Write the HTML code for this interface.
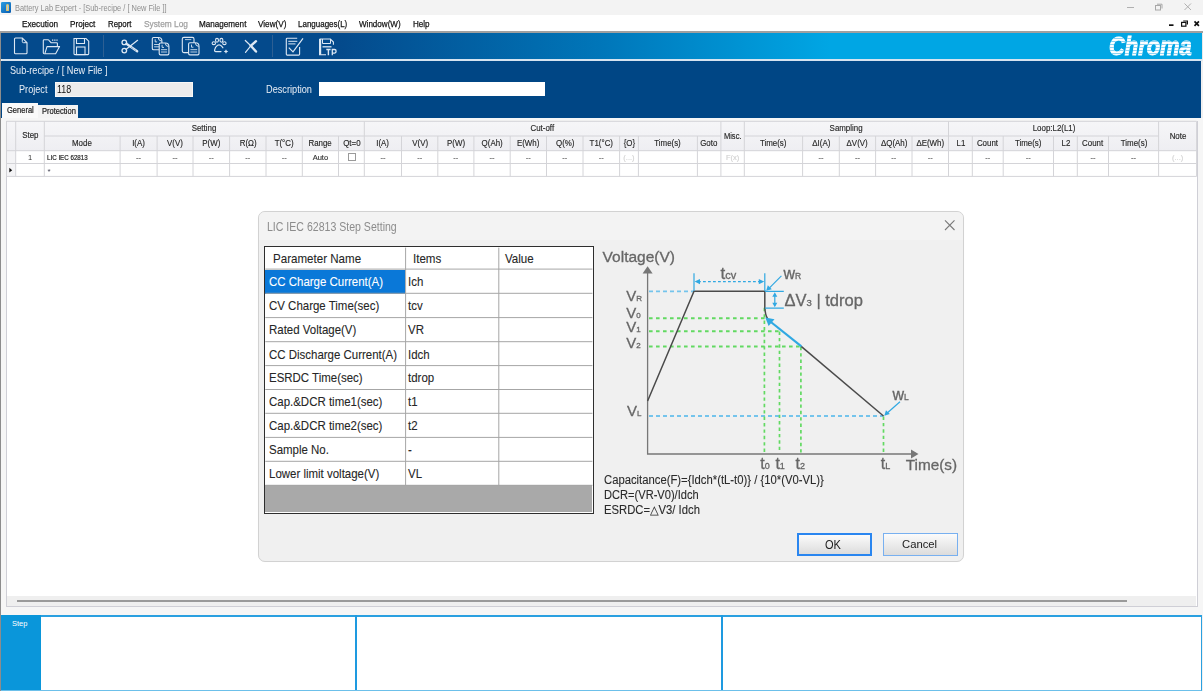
<!DOCTYPE html><html><head><meta charset="utf-8"><style>
html,body{margin:0;padding:0;}
body{width:1203px;height:691px;overflow:hidden;position:relative;background:#f0f0f0;font-family:"Liberation Sans",sans-serif;}
.t{position:absolute;white-space:nowrap;transform-origin:0 0;}
.c{text-align:center;}
.b{position:absolute;box-sizing:border-box;}
svg{position:absolute;left:0;top:0;}
</style></head><body>
<div class="b" style="left:0px;top:0px;width:1203px;height:15px;background:#f3f3f3;"></div>
<div class="b" style="left:1.2px;top:2px;width:10px;height:10.8px;background:linear-gradient(135deg,#2a9ee2,#0a5cb0);border-radius:1.2px;"></div>
<div class="b" style="left:5.6px;top:3.5px;width:3.6px;height:7.6px;background:#a8d0ec;border:0.9px solid #e2c46a;border-radius:1.5px 1.5px 0.8px 0.8px;"></div>
<div class="t" style="left:14.5px;top:4.2px;font-size:8.6px;line-height:8.6px;color:#8e8e8e;font-weight:normal;transform:scaleX(0.865);">Battery Lab Expert - [Sub-recipe / [ New File ]]</div>
<div class="b" style="left:1127px;top:7px;width:7px;height:1px;background:#b0b0b0;"></div>
<svg width="1203" height="40" viewBox="0 0 1203 40" style="left:0;top:0"><rect x="1155.5" y="5.5" width="5" height="4.5" fill="none" stroke="#a8a8a8" stroke-width="1"/><path d="M1157 4.2 H1162 V8.5" fill="none" stroke="#a8a8a8" stroke-width="1"/><path d="M1184.5 3.5 L1191 10 M1191 3.5 L1184.5 10" stroke="#a8a8a8" stroke-width="0.9"/></svg>
<div class="b" style="left:0px;top:15px;width:1203px;height:16.5px;background:#ffffff;"></div>
<div class="t" style="left:22px;top:18.8px;font-size:9.8px;line-height:9.8px;color:#111;font-weight:normal;transform:scaleX(0.8365714285714284);-webkit-text-stroke:0.25px;">Execution</div>
<div class="t" style="left:70px;top:18.8px;font-size:9.8px;line-height:9.8px;color:#111;font-weight:normal;transform:scaleX(0.8326530612244898);-webkit-text-stroke:0.25px;">Project</div>
<div class="t" style="left:107.5px;top:18.8px;font-size:9.8px;line-height:9.8px;color:#111;font-weight:normal;transform:scaleX(0.79934693877551);-webkit-text-stroke:0.25px;">Report</div>
<div class="t" style="left:143.5px;top:18.8px;font-size:9.8px;line-height:9.8px;color:#a0a0a0;font-weight:normal;transform:scaleX(0.8483265306122447);-webkit-text-stroke:0.25px;">System Log</div>
<div class="t" style="left:198.7px;top:18.8px;font-size:9.8px;line-height:9.8px;color:#111;font-weight:normal;transform:scaleX(0.8287346938775508);-webkit-text-stroke:0.25px;">Management</div>
<div class="t" style="left:258.2px;top:18.8px;font-size:9.8px;line-height:9.8px;color:#111;font-weight:normal;transform:scaleX(0.8326530612244898);-webkit-text-stroke:0.25px;">View(V)</div>
<div class="t" style="left:298px;top:18.8px;font-size:9.8px;line-height:9.8px;color:#111;font-weight:normal;transform:scaleX(0.8150204081632653);-webkit-text-stroke:0.25px;">Languages(L)</div>
<div class="t" style="left:359.4px;top:18.8px;font-size:9.8px;line-height:9.8px;color:#111;font-weight:normal;transform:scaleX(0.821877551020408);-webkit-text-stroke:0.25px;">Window(W)</div>
<div class="t" style="left:412.8px;top:18.8px;font-size:9.8px;line-height:9.8px;color:#111;font-weight:normal;transform:scaleX(0.8228571428571428);-webkit-text-stroke:0.25px;">Help</div>
<svg width="1203" height="40" viewBox="0 0 1203 40" style="left:0;top:0"><rect x="1169" y="24.3" width="4.5" height="1.7" fill="#111"/><rect x="1181.6" y="22.4" width="4.3" height="3.8" fill="none" stroke="#111" stroke-width="1.2"/><path d="M1183.2 21 H1187.4 V24.6" fill="none" stroke="#111" stroke-width="1.2"/><path d="M1194.5 21.4 L1198.9 25.8 M1198.9 21.4 L1194.5 25.8" stroke="#111" stroke-width="1.7"/></svg>
<div class="b" style="left:0px;top:31.3px;width:1203px;height:1.7px;background:#a0a0a0;"></div>
<div class="b" style="left:0px;top:33px;width:1203px;height:26px;background:linear-gradient(to right,#044a8c 0px,#044a8c 340px,#0076b9 600px,#00a6e4 830px,#00a6e4 1203px);"></div>
<div class="b" style="left:0px;top:33px;width:1.2px;height:658px;background:#8c8c8c;"></div>
<div class="b" style="left:1201.5px;top:33px;width:1.5px;height:28px;background:#e8e8e8;"></div>
<div class="b" style="left:1.5px;top:58.8px;width:1200px;height:2.2px;background:#d5e3f0;"></div>
<div class="b" style="left:103.3px;top:35px;width:0.9px;height:22px;background:#2d5f93;"></div>
<div class="b" style="left:271.6px;top:35px;width:0.9px;height:22px;background:#2d5f93;"></div>
<svg width="1203" height="691" viewBox="0 0 1203 691"><path d="M15.5 38 H22.3 L27 42.7 V52.8 Q27 53.8 26 53.8 H15.5 Q14.5 53.8 14.5 52.8 V39 Q14.5 38 15.5 38 Z" fill="none" stroke="#dde8f4" stroke-width="1.1"/><path d="M22.3 38 V41.5 Q22.3 42.7 23.5 42.7 H27" fill="none" stroke="#dde8f4" stroke-width="1"/><path d="M57.4 46.6 V43.5 Q57.4 42.7 56.6 42.7 H51 L49 40.3 Q48.7 39.7 48 39.7 H44.2 Q43.3 39.7 43.3 40.6 V52.8 Q43.3 53.7 44.2 53.7 H55.6 L59.6 46.6 H47 L45 53.2" fill="none" stroke="#dde8f4" stroke-width="1.1" stroke-linejoin="round"/><path d="M52 40.2 H57.6" stroke="#dde8f4" stroke-width="1.2" stroke-dasharray="1.3 0.9"/><path d="M74 38.5 H86 L88.7 41.2 V53.8 Q88.7 54.6 87.9 54.6 H74.8 Q74 54.6 74 53.8 Z" fill="none" stroke="#dde8f4" stroke-width="1.1"/><path d="M76.5 38.5 V43.5 H84.5 V38.5" fill="none" stroke="#dde8f4" stroke-width="1.1"/><rect x="76.5" y="47" width="8.5" height="7.6" fill="none" stroke="#dde8f4" stroke-width="1.1"/><circle cx="124.3" cy="42.4" r="2.3" fill="none" stroke="#dde8f4" stroke-width="1.3"/><circle cx="124.3" cy="50.6" r="2.3" fill="none" stroke="#dde8f4" stroke-width="1.3"/><path d="M126.2 49.3 L137.6 40.3" stroke="#dde8f4" stroke-width="1.2" stroke-linecap="round"/><path d="M126.4 43.8 L137.2 51.3" stroke="#dde8f4" stroke-width="2.3" stroke-linecap="round"/><path d="M131 47.2 L136 50.6" stroke="#054a8c" stroke-width="0.6" stroke-dasharray="0.8 0.8"/><path d="M153.60000000000002 37.5 H158.3 Q161.9 37.5 161.9 41.1 V48.400000000000006 Q161.9 49.7 160.6 49.7 H153.60000000000002 Q152.3 49.7 152.3 48.400000000000006 V38.8 Q152.3 37.5 153.60000000000002 37.5 Z" fill="#054a8c" stroke="#dde8f4" stroke-width="1.1"/><path d="M158.3 37.9 Q158.5 40.7 161.5 41.1" fill="none" stroke="#dde8f4" stroke-width="1"/><path d="M155.20000000000002 39.3 V41.9 H157.10000000000002" fill="none" stroke="#dde8f4" stroke-width="0.9"/><path d="M154.10000000000002 44.5 H160.1 M154.10000000000002 46.800000000000004 H160.1" stroke="#dde8f4" stroke-width="1" opacity="0.85"/><path d="M160.5 43 H165.3 Q168.9 43 168.9 46.6 V53.6 Q168.9 54.9 167.6 54.9 H160.5 Q159.2 54.9 159.2 53.6 V44.3 Q159.2 43 160.5 43 Z" fill="#054a8c" stroke="#dde8f4" stroke-width="1.1"/><path d="M165.3 43.4 Q165.5 46.2 168.5 46.6" fill="none" stroke="#dde8f4" stroke-width="1"/><path d="M162.1 44.8 V47.4 H164.0" fill="none" stroke="#dde8f4" stroke-width="0.9"/><path d="M161.0 49.699999999999996 H167.1 M161.0 52.0 H167.1" stroke="#dde8f4" stroke-width="1" opacity="0.85"/><rect x="182.3" y="37.4" width="11.7" height="15.2" rx="1.6" fill="none" stroke="#dde8f4" stroke-width="1.1"/><path d="M185 39.6 H191.3" stroke="#dde8f4" stroke-width="1" opacity="0.8"/><path d="M189.9 42.8 H195.4 Q199 42.8 199 46.4 V53.6 Q199 54.9 197.7 54.9 H189.9 Q188.6 54.9 188.6 53.6 V44.099999999999994 Q188.6 42.8 189.9 42.8 Z" fill="#054a8c" stroke="#dde8f4" stroke-width="1.1"/><path d="M195.4 43.199999999999996 Q195.6 46.0 198.6 46.4" fill="none" stroke="#dde8f4" stroke-width="1"/><path d="M191.5 44.599999999999994 V47.199999999999996 H193.4" fill="none" stroke="#dde8f4" stroke-width="0.9"/><path d="M190.4 49.699999999999996 H197.2 M190.4 52.0 H197.2" stroke="#dde8f4" stroke-width="1" opacity="0.85"/><ellipse cx="217" cy="40.3" rx="1.5" ry="1.9" fill="none" stroke="#dde8f4" stroke-width="1.1"/><ellipse cx="221.4" cy="40.3" rx="1.5" ry="1.9" fill="none" stroke="#dde8f4" stroke-width="1.1"/><ellipse cx="213.8" cy="43.2" rx="1.7" ry="1.4" fill="none" stroke="#dde8f4" stroke-width="1.1"/><ellipse cx="224.4" cy="43.2" rx="1.7" ry="1.4" fill="none" stroke="#dde8f4" stroke-width="1.1"/><path d="M221 51.6 H215.8 Q214.4 51.6 214.6 50 Q215.2 46.8 217.6 45.2 Q219 44.5 220.5 45.2 Q222 46.2 222.9 47.8" fill="none" stroke="#dde8f4" stroke-width="1.2" stroke-linecap="round"/><path d="M226 49.2 Q226.3 51 228.3 51.5 Q226.3 52 226 53.8 Q225.7 52 223.7 51.5 Q225.7 51 226 49.2 Z" fill="#dde8f4"/><path d="M245.3 40.5 L250.8 45.9 L245.5 52.4" fill="none" stroke="#dde8f4" stroke-width="1.2" stroke-linecap="round"/><path d="M256 41.2 L250.8 45.9 L256 51.5" fill="none" stroke="#dde8f4" stroke-width="2.4" stroke-linecap="round"/><path d="M297.2 38.2 H287.2 Q286.3 38.2 286.3 39.1 V54.2 Q286.3 55.1 287.2 55.1 H298.7 Q299.6 55.1 299.6 54.2 V47" fill="none" stroke="#dde8f4" stroke-width="1.1"/><path d="M288.3 41.3 H297.3 M288.3 43.9 H295.5" stroke="#dde8f4" stroke-width="1"/><path d="M288.8 47.6 L293 51.8 L303 38.3" fill="none" stroke="#dde8f4" stroke-width="1.2"/><path d="M319.6 39 H330.4 L333.4 42 V44.8 M319.6 39 V54.8 H326" fill="none" stroke="#dde8f4" stroke-width="1.1"/><path d="M320.3 39 V54.8" stroke="#dde8f4" stroke-width="1.8"/><path d="M322.5 39 V43.5 H330.5 V39" fill="none" stroke="#dde8f4" stroke-width="1"/><path d="M322.5 46.8 H331.5" stroke="#dde8f4" stroke-width="1.3"/><path d="M326.3 49.5 H330.6 M328.4 49.5 V55.2" stroke="#dde8f4" stroke-width="1.4"/><path d="M332.3 55.2 V49.5 H334.6 Q336.1 49.5 336.1 51.3 Q336.1 53.1 334.6 53.1 H332.3" fill="none" stroke="#dde8f4" stroke-width="1.3"/></svg>
<div class="t" style="left:1108.6px;top:32px;font-size:25px;line-height:29px;color:#fff;font-weight:bold;font-style:italic;transform:scaleX(0.875);-webkit-text-stroke:0.9px #fff;">Chroma</div>
<div class="b" style="left:1105px;top:36px;width:90px;height:20px;mix-blend-mode:darken;background:repeating-linear-gradient(to bottom,#fff 0px,#fff 2px,#8fd4f2 2px,#8fd4f2 3px);"></div>
<div class="b" style="left:1.2px;top:61px;width:1200.3px;height:56.5px;background:#004685;"></div>
<div class="t" style="left:10.3px;top:64.8px;font-size:11px;line-height:11px;color:#e8eef6;font-weight:normal;transform:scaleX(0.83);">Sub-recipe / [ New File ]</div>
<div class="t" style="left:19.1px;top:83.6px;font-size:11px;line-height:11px;color:#e8eef6;font-weight:normal;transform:scaleX(0.83);">Project</div>
<div class="b" style="left:54.9px;top:82.1px;width:138.3px;height:15px;background:#ececec;border:1px solid #f8f8f8;"></div>
<div class="t" style="left:56.5px;top:84px;font-size:10.5px;line-height:10.5px;color:#111;font-weight:normal;transform:scaleX(0.85);">118</div>
<div class="t" style="left:266px;top:83.6px;font-size:11px;line-height:11px;color:#e8eef6;font-weight:normal;transform:scaleX(0.835);">Description</div>
<div class="b" style="left:319px;top:82px;width:225.6px;height:14.1px;background:#ffffff;"></div>
<div class="b" style="left:38.2px;top:104.8px;width:39.9px;height:13px;background:#f4f4f4;"></div>
<div class="b" style="left:2px;top:103px;width:36.4px;height:16px;background:#fafafa;"></div>
<div class="t" style="left:6.6px;top:107.3px;font-size:8.2px;line-height:8.2px;color:#222;font-weight:normal;transform:scaleX(0.92);-webkit-text-stroke:0.2px;">General</div>
<div class="t" style="left:41.6px;top:107.9px;font-size:8.2px;line-height:8.2px;color:#222;font-weight:normal;transform:scaleX(0.92);-webkit-text-stroke:0.2px;">Protection</div>
<div class="b" style="left:1.2px;top:117.5px;width:1201.8px;height:497px;background:#f6f6f6;"></div>
<div class="b" style="left:5.5px;top:120.5px;width:1192px;height:486.5px;background:#ffffff;border:1.2px solid #cfcfd6;"></div>
<div class="b" style="left:6.5px;top:121.3px;width:1190.1px;height:29.39999999999999px;background:linear-gradient(#f6f6f8,#eeeef2);"></div>
<div class="b" style="left:6.5px;top:150.7px;width:1190.1px;height:25.700000000000017px;background:#ffffff;"></div>
<div class="b" style="left:6.5px;top:150.7px;width:9.2px;height:25.700000000000017px;background:#f4f4f6;"></div>
<svg width="1203" height="691" viewBox="0 0 1203 691"><path d="M6.5 121.3 H1196.6" stroke="#d4d4d8" stroke-width="1"/><path d="M44.3 136.0 H720.9" stroke="#d4d4d8" stroke-width="1"/><path d="M744.3 136.0 H1158.6" stroke="#d4d4d8" stroke-width="1"/><path d="M6.5 150.7 H1196.6" stroke="#d4d4d8" stroke-width="1"/><path d="M6.5 163.5 H1196.6" stroke="#d4d4d8" stroke-width="1"/><path d="M6.5 176.4 H1196.6" stroke="#d4d4d8" stroke-width="1"/><path d="M6.5 121.3 V176.4" stroke="#d4d4d8" stroke-width="1"/><path d="M15.7 121.3 V176.4" stroke="#d4d4d8" stroke-width="1"/><path d="M44.3 121.3 V176.4" stroke="#d4d4d8" stroke-width="1"/><path d="M364.3 121.3 V176.4" stroke="#d4d4d8" stroke-width="1"/><path d="M720.9 121.3 V176.4" stroke="#d4d4d8" stroke-width="1"/><path d="M744.3 121.3 V176.4" stroke="#d4d4d8" stroke-width="1"/><path d="M948.5 121.3 V176.4" stroke="#d4d4d8" stroke-width="1"/><path d="M1158.6 121.3 V176.4" stroke="#d4d4d8" stroke-width="1"/><path d="M1196.6 121.3 V176.4" stroke="#d4d4d8" stroke-width="1"/><path d="M120.1 136.0 V176.4" stroke="#d4d4d8" stroke-width="1"/><path d="M157.1 136.0 V176.4" stroke="#d4d4d8" stroke-width="1"/><path d="M193.0 136.0 V176.4" stroke="#d4d4d8" stroke-width="1"/><path d="M229.6 136.0 V176.4" stroke="#d4d4d8" stroke-width="1"/><path d="M266.0 136.0 V176.4" stroke="#d4d4d8" stroke-width="1"/><path d="M302.3 136.0 V176.4" stroke="#d4d4d8" stroke-width="1"/><path d="M338.5 136.0 V176.4" stroke="#d4d4d8" stroke-width="1"/><path d="M401.5 136.0 V176.4" stroke="#d4d4d8" stroke-width="1"/><path d="M437.8 136.0 V176.4" stroke="#d4d4d8" stroke-width="1"/><path d="M473.9 136.0 V176.4" stroke="#d4d4d8" stroke-width="1"/><path d="M510.2 136.0 V176.4" stroke="#d4d4d8" stroke-width="1"/><path d="M546.5 136.0 V176.4" stroke="#d4d4d8" stroke-width="1"/><path d="M583.0 136.0 V176.4" stroke="#d4d4d8" stroke-width="1"/><path d="M619.6 136.0 V176.4" stroke="#d4d4d8" stroke-width="1"/><path d="M638.4 136.0 V176.4" stroke="#d4d4d8" stroke-width="1"/><path d="M697.4 136.0 V176.4" stroke="#d4d4d8" stroke-width="1"/><path d="M802.6 136.0 V176.4" stroke="#d4d4d8" stroke-width="1"/><path d="M839.3 136.0 V176.4" stroke="#d4d4d8" stroke-width="1"/><path d="M875.6 136.0 V176.4" stroke="#d4d4d8" stroke-width="1"/><path d="M912.0 136.0 V176.4" stroke="#d4d4d8" stroke-width="1"/><path d="M972.3 136.0 V176.4" stroke="#d4d4d8" stroke-width="1"/><path d="M1003.2 136.0 V176.4" stroke="#d4d4d8" stroke-width="1"/><path d="M1053.5 136.0 V176.4" stroke="#d4d4d8" stroke-width="1"/><path d="M1077.3 136.0 V176.4" stroke="#d4d4d8" stroke-width="1"/><path d="M1108.5 136.0 V176.4" stroke="#d4d4d8" stroke-width="1"/></svg>
<div class="t c" style="left:15.7px;width:28.599999999999998px;top:130.9px;font-size:8.7px;line-height:8.7px;color:#262626;transform:scaleX(0.91);transform-origin:50% 0;-webkit-text-stroke:0.15px;">Step</div>
<div class="t c" style="left:44.3px;width:320.0px;top:124.4px;font-size:8.7px;line-height:8.7px;color:#262626;transform:scaleX(0.91);transform-origin:50% 0;-webkit-text-stroke:0.15px;">Setting</div>
<div class="t c" style="left:364.3px;width:356.59999999999997px;top:124.4px;font-size:8.7px;line-height:8.7px;color:#262626;transform:scaleX(0.91);transform-origin:50% 0;-webkit-text-stroke:0.15px;">Cut-off</div>
<div class="t c" style="left:720.9px;width:23.399999999999977px;top:131.9px;font-size:8.3px;line-height:8.3px;color:#262626;transform:scaleX(0.91);transform-origin:50% 0;-webkit-text-stroke:0.15px;">Misc.</div>
<div class="t c" style="left:744.3px;width:204.20000000000005px;top:124.4px;font-size:8.7px;line-height:8.7px;color:#262626;transform:scaleX(0.91);transform-origin:50% 0;-webkit-text-stroke:0.15px;">Sampling</div>
<div class="t c" style="left:948.5px;width:210.0999999999999px;top:124.4px;font-size:8.7px;line-height:8.7px;color:#262626;transform:scaleX(0.91);transform-origin:50% 0;-webkit-text-stroke:0.15px;">Loop:L2(L1)</div>
<div class="t c" style="left:1158.6px;width:38.0px;top:131.9px;font-size:8.7px;line-height:8.7px;color:#262626;transform:scaleX(0.91);transform-origin:50% 0;-webkit-text-stroke:0.15px;">Note</div>
<div class="t c" style="left:44.3px;width:75.8px;top:138.9px;font-size:8.7px;line-height:8.7px;color:#262626;transform:scaleX(0.91);transform-origin:50% 0;-webkit-text-stroke:0.15px;">Mode</div>
<div class="t c" style="left:120.1px;width:37.0px;top:138.9px;font-size:8.7px;line-height:8.7px;color:#262626;transform:scaleX(0.91);transform-origin:50% 0;-webkit-text-stroke:0.15px;">I(A)</div>
<div class="t c" style="left:157.1px;width:35.900000000000006px;top:138.9px;font-size:8.7px;line-height:8.7px;color:#262626;transform:scaleX(0.91);transform-origin:50% 0;-webkit-text-stroke:0.15px;">V(V)</div>
<div class="t c" style="left:193.0px;width:36.599999999999994px;top:138.9px;font-size:8.7px;line-height:8.7px;color:#262626;transform:scaleX(0.91);transform-origin:50% 0;-webkit-text-stroke:0.15px;">P(W)</div>
<div class="t c" style="left:229.6px;width:36.400000000000006px;top:138.9px;font-size:8.7px;line-height:8.7px;color:#262626;transform:scaleX(0.91);transform-origin:50% 0;-webkit-text-stroke:0.15px;">R(Ω)</div>
<div class="t c" style="left:266.0px;width:36.30000000000001px;top:138.9px;font-size:8.7px;line-height:8.7px;color:#262626;transform:scaleX(0.91);transform-origin:50% 0;-webkit-text-stroke:0.15px;">T(°C)</div>
<div class="t c" style="left:302.3px;width:36.19999999999999px;top:138.9px;font-size:8.7px;line-height:8.7px;color:#262626;transform:scaleX(0.91);transform-origin:50% 0;-webkit-text-stroke:0.15px;">Range</div>
<div class="t c" style="left:338.5px;width:25.80000000000001px;top:138.9px;font-size:8.7px;line-height:8.7px;color:#262626;transform:scaleX(0.91);transform-origin:50% 0;-webkit-text-stroke:0.15px;">Qt=0</div>
<div class="t c" style="left:364.3px;width:37.19999999999999px;top:138.9px;font-size:8.7px;line-height:8.7px;color:#262626;transform:scaleX(0.91);transform-origin:50% 0;-webkit-text-stroke:0.15px;">I(A)</div>
<div class="t c" style="left:401.5px;width:36.30000000000001px;top:138.9px;font-size:8.7px;line-height:8.7px;color:#262626;transform:scaleX(0.91);transform-origin:50% 0;-webkit-text-stroke:0.15px;">V(V)</div>
<div class="t c" style="left:437.8px;width:36.099999999999966px;top:138.9px;font-size:8.7px;line-height:8.7px;color:#262626;transform:scaleX(0.91);transform-origin:50% 0;-webkit-text-stroke:0.15px;">P(W)</div>
<div class="t c" style="left:473.9px;width:36.30000000000001px;top:138.9px;font-size:8.7px;line-height:8.7px;color:#262626;transform:scaleX(0.91);transform-origin:50% 0;-webkit-text-stroke:0.15px;">Q(Ah)</div>
<div class="t c" style="left:510.2px;width:36.30000000000001px;top:138.9px;font-size:8.7px;line-height:8.7px;color:#262626;transform:scaleX(0.91);transform-origin:50% 0;-webkit-text-stroke:0.15px;">E(Wh)</div>
<div class="t c" style="left:546.5px;width:36.5px;top:138.9px;font-size:8.7px;line-height:8.7px;color:#262626;transform:scaleX(0.91);transform-origin:50% 0;-webkit-text-stroke:0.15px;">Q(%)</div>
<div class="t c" style="left:583.0px;width:36.60000000000002px;top:138.9px;font-size:8.7px;line-height:8.7px;color:#262626;transform:scaleX(0.91);transform-origin:50% 0;-webkit-text-stroke:0.15px;">T1(°C)</div>
<div class="t c" style="left:619.6px;width:18.799999999999955px;top:138.9px;font-size:8.7px;line-height:8.7px;color:#262626;transform:scaleX(0.91);transform-origin:50% 0;-webkit-text-stroke:0.15px;">{O}</div>
<div class="t c" style="left:638.4px;width:59.0px;top:138.9px;font-size:8.7px;line-height:8.7px;color:#262626;transform:scaleX(0.91);transform-origin:50% 0;-webkit-text-stroke:0.15px;">Time(s)</div>
<div class="t c" style="left:697.4px;width:23.5px;top:138.9px;font-size:8.7px;line-height:8.7px;color:#262626;transform:scaleX(0.91);transform-origin:50% 0;-webkit-text-stroke:0.15px;">Goto</div>
<div class="t c" style="left:744.3px;width:58.30000000000007px;top:138.9px;font-size:8.7px;line-height:8.7px;color:#262626;transform:scaleX(0.91);transform-origin:50% 0;-webkit-text-stroke:0.15px;">Time(s)</div>
<div class="t c" style="left:802.6px;width:36.69999999999993px;top:138.9px;font-size:8.7px;line-height:8.7px;color:#262626;transform:scaleX(0.91);transform-origin:50% 0;-webkit-text-stroke:0.15px;">ΔI(A)</div>
<div class="t c" style="left:839.3px;width:36.30000000000007px;top:138.9px;font-size:8.7px;line-height:8.7px;color:#262626;transform:scaleX(0.91);transform-origin:50% 0;-webkit-text-stroke:0.15px;">ΔV(V)</div>
<div class="t c" style="left:875.6px;width:36.39999999999998px;top:138.9px;font-size:8.7px;line-height:8.7px;color:#262626;transform:scaleX(0.91);transform-origin:50% 0;-webkit-text-stroke:0.15px;">ΔQ(Ah)</div>
<div class="t c" style="left:912.0px;width:36.5px;top:138.9px;font-size:8.7px;line-height:8.7px;color:#262626;transform:scaleX(0.91);transform-origin:50% 0;-webkit-text-stroke:0.15px;">ΔE(Wh)</div>
<div class="t c" style="left:948.5px;width:23.799999999999955px;top:138.9px;font-size:8.7px;line-height:8.7px;color:#262626;transform:scaleX(0.91);transform-origin:50% 0;-webkit-text-stroke:0.15px;">L1</div>
<div class="t c" style="left:972.3px;width:30.90000000000009px;top:138.9px;font-size:8.7px;line-height:8.7px;color:#262626;transform:scaleX(0.91);transform-origin:50% 0;-webkit-text-stroke:0.15px;">Count</div>
<div class="t c" style="left:1003.2px;width:50.299999999999955px;top:138.9px;font-size:8.7px;line-height:8.7px;color:#262626;transform:scaleX(0.91);transform-origin:50% 0;-webkit-text-stroke:0.15px;">Time(s)</div>
<div class="t c" style="left:1053.5px;width:23.799999999999955px;top:138.9px;font-size:8.7px;line-height:8.7px;color:#262626;transform:scaleX(0.91);transform-origin:50% 0;-webkit-text-stroke:0.15px;">L2</div>
<div class="t c" style="left:1077.3px;width:31.200000000000045px;top:138.9px;font-size:8.7px;line-height:8.7px;color:#262626;transform:scaleX(0.91);transform-origin:50% 0;-webkit-text-stroke:0.15px;">Count</div>
<div class="t c" style="left:1108.5px;width:50.09999999999991px;top:138.9px;font-size:8.7px;line-height:8.7px;color:#262626;transform:scaleX(0.91);transform-origin:50% 0;-webkit-text-stroke:0.15px;">Time(s)</div>
<div class="t c" style="left:15.7px;width:28.599999999999998px;top:154.3px;font-size:7.5px;line-height:7.5px;color:#333;">1</div>
<div class="t" style="left:47px;top:154px;font-size:7.4px;line-height:7.4px;color:#222;font-weight:normal;transform:scaleX(0.84);-webkit-text-stroke:0.2px;">LIC IEC 62813</div>
<div class="t c" style="left:120.1px;width:37.0px;top:153.5px;font-size:7.5px;line-height:7.5px;color:#333;-webkit-text-stroke:0.15px;">--</div>
<div class="t c" style="left:157.1px;width:35.900000000000006px;top:153.5px;font-size:7.5px;line-height:7.5px;color:#333;-webkit-text-stroke:0.15px;">--</div>
<div class="t c" style="left:193.0px;width:36.599999999999994px;top:153.5px;font-size:7.5px;line-height:7.5px;color:#333;-webkit-text-stroke:0.15px;">--</div>
<div class="t c" style="left:229.6px;width:36.400000000000006px;top:153.5px;font-size:7.5px;line-height:7.5px;color:#333;-webkit-text-stroke:0.15px;">--</div>
<div class="t c" style="left:266.0px;width:36.30000000000001px;top:153.5px;font-size:7.5px;line-height:7.5px;color:#333;-webkit-text-stroke:0.15px;">--</div>
<div class="t c" style="left:302.3px;width:36.19999999999999px;top:153.5px;font-size:7.5px;line-height:7.5px;color:#333;-webkit-text-stroke:0.15px;">Auto</div>
<div class="b" style="left:348px;top:153.2px;width:8px;height:8px;border:1px solid #9a9a9a;background:#fff;"></div>
<div class="t c" style="left:364.3px;width:37.19999999999999px;top:153.5px;font-size:7.5px;line-height:7.5px;color:#333;-webkit-text-stroke:0.15px;">--</div>
<div class="t c" style="left:401.5px;width:36.30000000000001px;top:153.5px;font-size:7.5px;line-height:7.5px;color:#333;-webkit-text-stroke:0.15px;">--</div>
<div class="t c" style="left:437.8px;width:36.099999999999966px;top:153.5px;font-size:7.5px;line-height:7.5px;color:#333;-webkit-text-stroke:0.15px;">--</div>
<div class="t c" style="left:473.9px;width:36.30000000000001px;top:153.5px;font-size:7.5px;line-height:7.5px;color:#333;-webkit-text-stroke:0.15px;">--</div>
<div class="t c" style="left:510.2px;width:36.30000000000001px;top:153.5px;font-size:7.5px;line-height:7.5px;color:#333;-webkit-text-stroke:0.15px;">--</div>
<div class="t c" style="left:546.5px;width:36.5px;top:153.5px;font-size:7.5px;line-height:7.5px;color:#333;-webkit-text-stroke:0.15px;">--</div>
<div class="t c" style="left:583.0px;width:36.60000000000002px;top:153.5px;font-size:7.5px;line-height:7.5px;color:#333;-webkit-text-stroke:0.15px;">--</div>
<div class="t c" style="left:619.6px;width:18.799999999999955px;top:153.5px;font-size:7.5px;line-height:7.5px;color:#d2d2d2;-webkit-text-stroke:0.15px;">(...)</div>
<div class="t c" style="left:720.9px;width:23.399999999999977px;top:153.5px;font-size:7.5px;line-height:7.5px;color:#d2d2d2;-webkit-text-stroke:0.15px;">F(x)</div>
<div class="t c" style="left:802.6px;width:36.69999999999993px;top:153.5px;font-size:7.5px;line-height:7.5px;color:#333;-webkit-text-stroke:0.15px;">--</div>
<div class="t c" style="left:839.3px;width:36.30000000000007px;top:153.5px;font-size:7.5px;line-height:7.5px;color:#333;-webkit-text-stroke:0.15px;">--</div>
<div class="t c" style="left:875.6px;width:36.39999999999998px;top:153.5px;font-size:7.5px;line-height:7.5px;color:#333;-webkit-text-stroke:0.15px;">--</div>
<div class="t c" style="left:912.0px;width:36.5px;top:153.5px;font-size:7.5px;line-height:7.5px;color:#333;-webkit-text-stroke:0.15px;">--</div>
<div class="t c" style="left:972.3px;width:30.90000000000009px;top:153.5px;font-size:7.5px;line-height:7.5px;color:#333;-webkit-text-stroke:0.15px;">--</div>
<div class="t c" style="left:1003.2px;width:50.299999999999955px;top:153.5px;font-size:7.5px;line-height:7.5px;color:#333;-webkit-text-stroke:0.15px;">--</div>
<div class="t c" style="left:1077.3px;width:31.200000000000045px;top:153.5px;font-size:7.5px;line-height:7.5px;color:#333;-webkit-text-stroke:0.15px;">--</div>
<div class="t c" style="left:1108.5px;width:50.09999999999991px;top:153.5px;font-size:7.5px;line-height:7.5px;color:#333;-webkit-text-stroke:0.15px;">--</div>
<div class="t c" style="left:1158.6px;width:38.0px;top:153.5px;font-size:7.5px;line-height:7.5px;color:#d2d2d2;-webkit-text-stroke:0.15px;">(...)</div>
<svg width="1203" height="691" viewBox="0 0 1203 691"><path d="M9.3 167.8 L12.2 170.2 L9.3 172.6 Z" fill="#111"/></svg>
<div class="t" style="left:47.5px;top:167.5px;font-size:8px;line-height:8px;color:#445;font-weight:normal;">*</div>
<div class="b" style="left:6.7px;top:595.7px;width:1189.6px;height:10.1px;background:#efefef;"></div>
<div class="b" style="left:17px;top:600.4px;width:1110px;height:1.7px;background:#9a9a9a;"></div>
<div class="b" style="left:1.2px;top:614.6px;width:1200.8px;height:76.4px;background:#ffffff;border:1.5px solid #2aa0e0;border-top:2px solid #2aa0e0;border-bottom:1px solid #6cc0ea;border-left:none;"></div>
<div class="b" style="left:1.2px;top:614.6px;width:39.5px;height:75px;background:#0a96da;"></div>
<div class="t" style="left:11.9px;top:619.5px;font-size:7.5px;line-height:7.5px;color:#ffffff;font-weight:normal;">Step</div>
<div class="b" style="left:355.3px;top:615px;width:2.2px;height:75px;background:#1e9ae0;"></div>
<div class="b" style="left:721.1px;top:615px;width:2.2px;height:75px;background:#1e9ae0;"></div>
<div class="b" style="left:258.3px;top:210.7px;width:706.0999999999999px;height:351.09999999999997px;background:#f0f0f0;border:1px solid #d2d2d2;border-radius:7px;box-shadow:0 0 1px rgba(0,0,0,0.05);"></div>
<div class="b" style="left:259.3px;top:211.7px;width:704.0999999999999px;height:28.5px;background:#f3f3f3;border-radius:6px 6px 0 0;"></div>
<div class="t" style="left:266.9px;top:220.7px;font-size:12px;line-height:12px;color:#8c8c8c;font-weight:normal;transform:scaleX(0.88);">LIC IEC 62813 Step Setting</div>
<svg width="1203" height="691" viewBox="0 0 1203 691"><path d="M945 220.3 L954.5 230 M954.5 220.3 L945 230" stroke="#7a7a7a" stroke-width="1.1"/></svg>
<div class="b" style="left:263.7px;top:246.0px;width:330.29999999999995px;height:267.49999999999994px;background:#ffffff;border:1.6px solid #2e2e2e;"></div>
<div class="b" style="left:265.29999999999995px;top:485.3px;width:327.09999999999997px;height:26.699999999999942px;background:#a9a9a9;"></div>
<div class="b" style="left:265.29999999999995px;top:269.6px;width:139.80000000000004px;height:24.0px;background:#0a78d8;"></div>
<svg width="1203" height="691" viewBox="0 0 1203 691"><path d="M265.29999999999995 269.1 H592.4" stroke="#a6a6a6" stroke-width="1"/><path d="M265.29999999999995 293.3 H592.4" stroke="#a6a6a6" stroke-width="1"/><path d="M265.29999999999995 317.6 H592.4" stroke="#a6a6a6" stroke-width="1"/><path d="M265.29999999999995 341.7 H592.4" stroke="#a6a6a6" stroke-width="1"/><path d="M265.29999999999995 365.6 H592.4" stroke="#a6a6a6" stroke-width="1"/><path d="M265.29999999999995 389.5 H592.4" stroke="#a6a6a6" stroke-width="1"/><path d="M265.29999999999995 413.3 H592.4" stroke="#a6a6a6" stroke-width="1"/><path d="M265.29999999999995 437.4 H592.4" stroke="#a6a6a6" stroke-width="1"/><path d="M265.29999999999995 461.3 H592.4" stroke="#a6a6a6" stroke-width="1"/><path d="M265.29999999999995 485.3 H592.4" stroke="#a6a6a6" stroke-width="1"/><path d="M405.6 247.60000000000002 V485.3" stroke="#a6a6a6" stroke-width="1"/><path d="M498.8 247.60000000000002 V485.3" stroke="#a6a6a6" stroke-width="1"/></svg>
<div class="t" style="left:273.1px;top:252.2px;font-size:13px;line-height:13px;color:#262626;font-weight:normal;transform:scaleX(0.89);-webkit-text-stroke:0.1px;">Parameter Name</div>
<div class="t" style="left:412.6px;top:252.2px;font-size:13px;line-height:13px;color:#262626;font-weight:normal;transform:scaleX(0.89);-webkit-text-stroke:0.1px;">Items</div>
<div class="t" style="left:505.3px;top:252.2px;font-size:13px;line-height:13px;color:#262626;font-weight:normal;transform:scaleX(0.89);-webkit-text-stroke:0.1px;">Value</div>
<div class="t" style="left:268.5px;top:274.90000000000003px;font-size:13px;line-height:13px;color:#ffffff;font-weight:normal;transform:scaleX(0.882);-webkit-text-stroke:0.1px;">CC Charge Current(A)</div>
<div class="t" style="left:408.4px;top:274.90000000000003px;font-size:13px;line-height:13px;color:#262626;font-weight:normal;transform:scaleX(0.882);-webkit-text-stroke:0.1px;">Ich</div>
<div class="t" style="left:268.5px;top:299.1px;font-size:13px;line-height:13px;color:#262626;font-weight:normal;transform:scaleX(0.882);-webkit-text-stroke:0.1px;">CV Charge Time(sec)</div>
<div class="t" style="left:408.4px;top:299.1px;font-size:13px;line-height:13px;color:#262626;font-weight:normal;transform:scaleX(0.882);-webkit-text-stroke:0.1px;">tcv</div>
<div class="t" style="left:268.5px;top:323.40000000000003px;font-size:13px;line-height:13px;color:#262626;font-weight:normal;transform:scaleX(0.882);-webkit-text-stroke:0.1px;">Rated Voltage(V)</div>
<div class="t" style="left:408.4px;top:323.40000000000003px;font-size:13px;line-height:13px;color:#262626;font-weight:normal;transform:scaleX(0.882);-webkit-text-stroke:0.1px;">VR</div>
<div class="t" style="left:268.5px;top:347.5px;font-size:13px;line-height:13px;color:#262626;font-weight:normal;transform:scaleX(0.882);-webkit-text-stroke:0.1px;">CC Discharge Current(A)</div>
<div class="t" style="left:408.4px;top:347.5px;font-size:13px;line-height:13px;color:#262626;font-weight:normal;transform:scaleX(0.882);-webkit-text-stroke:0.1px;">Idch</div>
<div class="t" style="left:268.5px;top:371.40000000000003px;font-size:13px;line-height:13px;color:#262626;font-weight:normal;transform:scaleX(0.882);-webkit-text-stroke:0.1px;">ESRDC Time(sec)</div>
<div class="t" style="left:408.4px;top:371.40000000000003px;font-size:13px;line-height:13px;color:#262626;font-weight:normal;transform:scaleX(0.882);-webkit-text-stroke:0.1px;">tdrop</div>
<div class="t" style="left:268.5px;top:395.3px;font-size:13px;line-height:13px;color:#262626;font-weight:normal;transform:scaleX(0.882);-webkit-text-stroke:0.1px;">Cap.&amp;DCR time1(sec)</div>
<div class="t" style="left:408.4px;top:395.3px;font-size:13px;line-height:13px;color:#262626;font-weight:normal;transform:scaleX(0.882);-webkit-text-stroke:0.1px;">t1</div>
<div class="t" style="left:268.5px;top:419.1px;font-size:13px;line-height:13px;color:#262626;font-weight:normal;transform:scaleX(0.882);-webkit-text-stroke:0.1px;">Cap.&amp;DCR time2(sec)</div>
<div class="t" style="left:408.4px;top:419.1px;font-size:13px;line-height:13px;color:#262626;font-weight:normal;transform:scaleX(0.882);-webkit-text-stroke:0.1px;">t2</div>
<div class="t" style="left:268.5px;top:443.2px;font-size:13px;line-height:13px;color:#262626;font-weight:normal;transform:scaleX(0.882);-webkit-text-stroke:0.1px;">Sample No.</div>
<div class="t" style="left:408.4px;top:443.2px;font-size:13px;line-height:13px;color:#262626;font-weight:normal;transform:scaleX(0.882);-webkit-text-stroke:0.1px;">-</div>
<div class="t" style="left:268.5px;top:467.1px;font-size:13px;line-height:13px;color:#262626;font-weight:normal;transform:scaleX(0.882);-webkit-text-stroke:0.1px;">Lower limit voltage(V)</div>
<div class="t" style="left:408.4px;top:467.1px;font-size:13px;line-height:13px;color:#262626;font-weight:normal;transform:scaleX(0.882);-webkit-text-stroke:0.1px;">VL</div>
<svg width="1203" height="691" viewBox="0 0 1203 691"><path d="M647.6 272 V454 H912" fill="none" stroke="#777777" stroke-width="1.3"/><path d="M642.6 273.6 L647.6 266.2 L652.6 273.6 Z" fill="#777777"/><path d="M911 449.4 L918.5 454 L911 458.6 Z" fill="#777777"/><path d="M649 291.3 H693.5 M649 416 H883.5" stroke="#74c4ec" stroke-width="1.8" stroke-dasharray="4 3"/><path d="M649 318.2 H765 M649 331.3 H779.5 M649 346.5 H801" stroke="#62d962" stroke-width="1.9" stroke-dasharray="3.6 3.4"/><path d="M764.4 307.8 V453 M779.5 331.5 V453 M800.9 346.8 V453 M883.5 416.5 V453" stroke="#62d962" stroke-width="1.7" stroke-dasharray="3.4 3"/><path d="M647.6 401 L694 291.3 H764.8 V307.3 Q765.3 315.5 767.5 318.5" fill="none" stroke="#4a4a4a" stroke-width="1.5"/><path d="M801.2 346.4 L883.5 416" fill="none" stroke="#4a4a4a" stroke-width="1.5"/><path d="M769 320.5 L801.4 346.3" fill="none" stroke="#30a8e2" stroke-width="2.2"/><path d="M765.3 317.5 L774.5 319.2 L768.6 326 Z" fill="#30a8e2"/><path d="M694 273.3 V291 M764.8 273.3 V291" stroke="#30a8e2" stroke-width="1.2"/><path d="M698 281.6 H761" stroke="#30a8e2" stroke-width="1.2" stroke-dasharray="2.8 2.2"/><path d="M694.6 281.6 L700 279 V284.2 Z M764.2 281.6 L758.8 279 V284.2 Z" fill="#30a8e2"/><path d="M781.4 275.8 L769.5 287.8" stroke="#30a8e2" stroke-width="1.2"/><path d="M766.2 290.8 L767.8 285.3 L771.8 289.2 Z" fill="#30a8e2"/><path d="M765 291.3 H783.8 M765 308.2 H783.8 M774.8 294 V305.5" stroke="#30a8e2" stroke-width="1.2"/><path d="M774.8 292.3 L772.3 296.8 H777.3 Z M774.8 307.2 L772.3 302.7 H777.3 Z" fill="#30a8e2"/><path d="M900 401.8 L887.5 412.8" stroke="#30a8e2" stroke-width="1.2"/><path d="M884.3 415.8 L886 410.2 L889.8 414 Z" fill="#30a8e2"/></svg>
<div class="t" style="left:602.6px;top:249.3px;font-size:15.5px;line-height:15.5px;color:#666666;font-weight:normal;-webkit-text-stroke:0.3px;">Voltage(V)</div>
<div class="t" style="left:626.3px;top:287.5px;font-size:15px;line-height:15px;color:#666666;-webkit-text-stroke:0.3px;">V<span style="font-size:8px">R</span></div>
<div class="t" style="left:626.3px;top:305.3px;font-size:15px;line-height:15px;color:#666666;-webkit-text-stroke:0.3px;">V<span style="font-size:8px">0</span></div>
<div class="t" style="left:626.3px;top:319.3px;font-size:15px;line-height:15px;color:#666666;-webkit-text-stroke:0.3px;">V<span style="font-size:8px">1</span></div>
<div class="t" style="left:626.3px;top:334.8px;font-size:15px;line-height:15px;color:#666666;-webkit-text-stroke:0.3px;">V<span style="font-size:8px">2</span></div>
<div class="t" style="left:627px;top:402.5px;font-size:15px;line-height:15px;color:#666666;-webkit-text-stroke:0.3px;">V<span style="font-size:8px">L</span></div>
<div class="t" style="left:720.5px;top:264.5px;font-size:17px;line-height:17px;color:#666666;-webkit-text-stroke:0.3px;">t<span style="font-size:11px">cv</span></div>
<div class="t" style="left:783.5px;top:266px;font-size:16px;line-height:16px;color:#666666;-webkit-text-stroke:0.3px;">w<span style="font-size:8.5px">R</span></div>
<div class="t" style="left:892.5px;top:386.5px;font-size:16px;line-height:16px;color:#666666;-webkit-text-stroke:0.3px;">w<span style="font-size:8.5px">L</span></div>
<div class="t" style="left:784.5px;top:292.3px;font-size:16.5px;line-height:16.5px;color:#666666;-webkit-text-stroke:0.3px;">ΔV<span style="font-size:9.5px">3</span> | tdrop</div>
<div class="t" style="left:760.2px;top:455.5px;font-size:16px;line-height:16px;color:#666666;-webkit-text-stroke:0.3px;">t<span style="font-size:9px">0</span></div>
<div class="t" style="left:775.4px;top:455.5px;font-size:16px;line-height:16px;color:#666666;-webkit-text-stroke:0.3px;">t<span style="font-size:9px">1</span></div>
<div class="t" style="left:795.6px;top:455.5px;font-size:16px;line-height:16px;color:#666666;-webkit-text-stroke:0.3px;">t<span style="font-size:9px">2</span></div>
<div class="t" style="left:880.7px;top:455.5px;font-size:16px;line-height:16px;color:#666666;-webkit-text-stroke:0.3px;">t<span style="font-size:9px">L</span></div>
<div class="t" style="left:905.8px;top:456.5px;font-size:15.3px;line-height:15.3px;color:#666666;font-weight:normal;-webkit-text-stroke:0.3px;">Time(s)</div>
<div class="t" style="left:604px;top:473.8px;font-size:12px;line-height:12px;color:#2a2a2a;font-weight:normal;transform:scaleX(0.94);-webkit-text-stroke:0.1px;">Capacitance(F)={Idch*(tL-t0)} / {10*(V0-VL)}</div>
<div class="t" style="left:604px;top:488.9px;font-size:12px;line-height:12px;color:#2a2a2a;font-weight:normal;transform:scaleX(0.925);-webkit-text-stroke:0.1px;">DCR=(VR-V0)/Idch</div>
<div class="t" style="left:604px;top:503.5px;font-size:12px;line-height:12px;color:#2a2a2a;font-weight:normal;transform:scaleX(0.94);-webkit-text-stroke:0.1px;">ESRDC=△V3/ Idch</div>
<div class="b" style="left:796.5px;top:533.1px;width:75.4px;height:23.3px;background:linear-gradient(#fbfbfb,#dcdcdc);border:2px solid #2a86f0;"></div>
<div class="b" style="left:883.4px;top:533.1px;width:74.6px;height:23.3px;background:linear-gradient(#fbfbfb,#dcdcdc);border:1.5px solid #78b0f0;"></div>
<div class="t" style="left:825.3px;top:538.8px;font-size:12px;line-height:12px;color:#222;font-weight:normal;transform:scaleX(0.92);">OK</div>
<div class="t" style="left:902.2px;top:538.8px;font-size:11.5px;line-height:11.5px;color:#222;font-weight:normal;transform:scaleX(0.98);">Cancel</div>
</body></html>
